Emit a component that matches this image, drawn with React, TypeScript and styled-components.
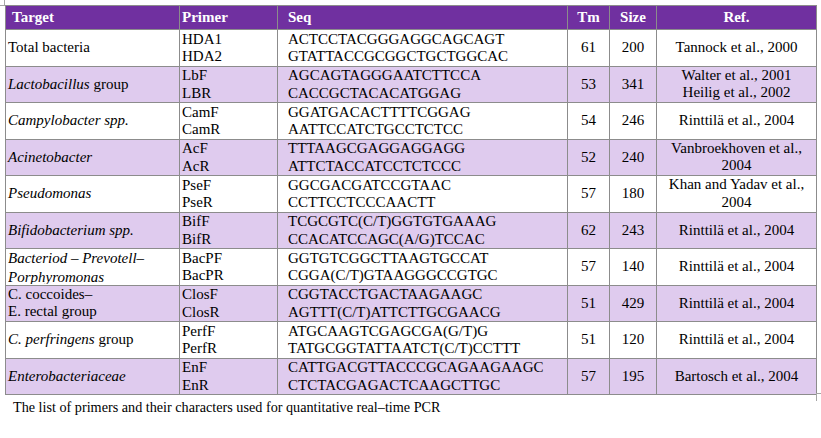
import React from "react";
import styled, { createGlobalStyle } from "styled-components";

const serif = `"Liberation Serif", "Tinos", "Times New Roman", "DejaVu Serif", serif`;

const Global = createGlobalStyle`
  html, body { margin: 0; padding: 0; background: #ffffff; }
  body { font-family: ${serif}; color: #000; }
`;

const Page = styled.div`
  position: relative;
  width: 821px;
  height: 438px;
  box-sizing: border-box;
  padding: 5px 0 0 5px;
  overflow: hidden;
  font-family: ${serif};
`;

const CornerTL = styled.span`
  position: absolute;
  left: 0;
  top: 0;
  width: 4px;
  height: 5px;
  border-right: 1px solid #a6a6a6;
  border-bottom: 1px solid #a6a6a6;
`;

const CornerBR = styled.span`
  position: absolute;
  left: 816px;
  top: 393px;
  width: 6px;
  height: 7px;
  border-left: 1px solid #a6a6a6;
  border-top: 1px solid #a6a6a6;
`;

const Table = styled.table`
  border-collapse: collapse;
  table-layout: fixed;
  width: 811px;
  font-family: ${serif};
  font-size: 15px;
  line-height: 17.5px;
`;

const HeadRow = styled.tr`
  background: #7030a0;
  height: 24px;
`;

const Th = styled.th<{ $align?: string; $pad?: number }>`
  border: 1px solid #8c8c8c;
  color: #ffffff;
  font-weight: bold;
  font-family: ${serif};
  text-align: ${(p) => p.$align || "left"};
  padding: 0 0 0 ${(p) => (p.$pad ?? 0)}px;
  vertical-align: middle;
  white-space: nowrap;
`;

const Row = styled.tr<{ $shaded: boolean }>`
  background: ${(p) => (p.$shaded ? "#dfcbee" : "#ffffff")};
  height: 36.25px;
`;

const Td = styled.td<{ $align?: string; $pad?: number; $valign?: string }>`
  border: 1px solid #8c8c8c;
  font-family: ${serif};
  padding: 0 0 0 ${(p) => (p.$pad ?? 0)}px;
  text-align: ${(p) => p.$align || "left"};
  vertical-align: ${(p) => p.$valign || "middle"};
  white-space: nowrap;
`;

const Clip = styled.div`
  height: 35px;
  overflow: hidden;
  line-height: 19px;
  font-style: italic;
`;

const Lines = styled.div`
  display: flex;
  flex-direction: column;
  padding-top: 0.5px;
`;

const Caption = styled.p`
  margin: 3px 0 0 8px;
  font-family: ${serif};
  font-size: 14.2px;
  line-height: 18px;
  color: #000;
`;

type RowData = {
  target: React.ReactNode;
  clipTarget?: boolean;
  primers: [string, string];
  seqs: [string, string];
  tm: string;
  size: string;
  ref: React.ReactNode;
};

const rows: RowData[] = [
  {
    target: "Total bacteria",
    primers: ["HDA1", "HDA2"],
    seqs: ["ACTCCTACGGGAGGCAGCAGT", "GTATTACCGCGGCTGCTGGCAC"],
    tm: "61",
    size: "200",
    ref: "Tannock et al., 2000",
  },
  {
    target: (
      <>
        <i>Lactobacillus</i> group
      </>
    ),
    primers: ["LbF", "LBR"],
    seqs: ["AGCAGTAGGGAATCTTCCA", "CACCGCTACACATGGAG"],
    tm: "53",
    size: "341",
    ref: (
      <>
        Walter et al., 2001
        <br />
        Heilig et al., 2002
      </>
    ),
  },
  {
    target: <i>Campylobacter spp.</i>,
    primers: ["CamF", "CamR"],
    seqs: ["GGATGACACTTTTCGGAG", "AATTCCATCTGCCTCTCC"],
    tm: "54",
    size: "246",
    ref: "Rinttilä et al., 2004",
  },
  {
    target: <i>Acinetobacter</i>,
    primers: ["AcF", "AcR"],
    seqs: ["TTTAAGCGAGGAGGAGG", "ATTCTACCATCCTCTCCC"],
    tm: "52",
    size: "240",
    ref: (
      <>
        Vanbroekhoven et al.,
        <br />
        2004
      </>
    ),
  },
  {
    target: <i>Pseudomonas</i>,
    primers: ["PseF", "PseR"],
    seqs: ["GGCGACGATCCGTAAC", "CCTTCCTCCCAACTT"],
    tm: "57",
    size: "180",
    ref: (
      <>
        Khan and Yadav et al.,
        <br />
        2004
      </>
    ),
  },
  {
    target: <i>Bifidobacterium spp.</i>,
    primers: ["BifF", "BifR"],
    seqs: ["TCGCGTC(C/T)GGTGTGAAAG", "CCACATCCAGC(A/G)TCCAC"],
    tm: "62",
    size: "243",
    ref: "Rinttilä et al., 2004",
  },
  {
    target: (
      <>
        Bacteriod – Prevotell–
        <br />
        Porphyromonas
      </>
    ),
    clipTarget: true,
    primers: ["BacPF", "BacPR"],
    seqs: ["GGTGTCGGCTTAAGTGCCAT", "CGGA(C/T)GTAAGGGCCGTGC"],
    tm: "57",
    size: "140",
    ref: "Rinttilä et al., 2004",
  },
  {
    target: (
      <>
        C. coccoides–
        <br />
        E. rectal group
      </>
    ),
    primers: ["ClosF", "ClosR"],
    seqs: ["CGGTACCTGACTAAGAAGC", "AGTTT(C/T)ATTCTTGCGAACG"],
    tm: "51",
    size: "429",
    ref: "Rinttilä et al., 2004",
  },
  {
    target: (
      <>
        <i>C. perfringens</i> group
      </>
    ),
    primers: ["PerfF", "PerfR"],
    seqs: ["ATGCAAGTCGAGCGA(G/T)G", "TATGCGGTATTAATCT(C/T)CCTTT"],
    tm: "51",
    size: "120",
    ref: "Rinttilä et al., 2004",
  },
  {
    target: <i>Enterobacteriaceae</i>,
    primers: ["EnF", "EnR"],
    seqs: ["CATTGACGTTACCCGCAGAAGAAGC", "CTCTACGAGACTCAAGCTTGC"],
    tm: "57",
    size: "195",
    ref: "Bartosch et al., 2004",
  },
];

export default function App() {
  return (
    <Page>
      <Global />
      <CornerTL />
      <CornerBR />
      <Table>
        <colgroup>
          <col style={{ width: 174 }} />
          <col style={{ width: 98 }} />
          <col style={{ width: 290 }} />
          <col style={{ width: 42 }} />
          <col style={{ width: 47 }} />
          <col style={{ width: 160 }} />
        </colgroup>
        <thead>
          <HeadRow>
            <Th $pad={6}>Target</Th>
            <Th $pad={2}>Primer</Th>
            <Th $pad={10}>Seq</Th>
            <Th $align="center">Tm</Th>
            <Th $align="center">Size</Th>
            <Th $align="center">Ref.</Th>
          </HeadRow>
        </thead>
        <tbody>
          {rows.map((r, i) => (
            <Row key={i} $shaded={i % 2 === 1}>
              {r.clipTarget ? (
                <Td $pad={2} $valign="top">
                  <Clip>{r.target}</Clip>
                </Td>
              ) : (
                <Td $pad={2}>{r.target}</Td>
              )}
              <Td $pad={2} $valign="top">
                <Lines>
                  <span>{r.primers[0]}</span>
                  <span>{r.primers[1]}</span>
                </Lines>
              </Td>
              <Td $pad={10} $valign="top">
                <Lines>
                  <span>{r.seqs[0]}</span>
                  <span>{r.seqs[1]}</span>
                </Lines>
              </Td>
              <Td $align="center">{r.tm}</Td>
              <Td $align="center">{r.size}</Td>
              <Td $align="center">{r.ref}</Td>
            </Row>
          ))}
        </tbody>
      </Table>
      <Caption>
        The list of primers and their characters used for quantitative real–time PCR
      </Caption>
    </Page>
  );
}
